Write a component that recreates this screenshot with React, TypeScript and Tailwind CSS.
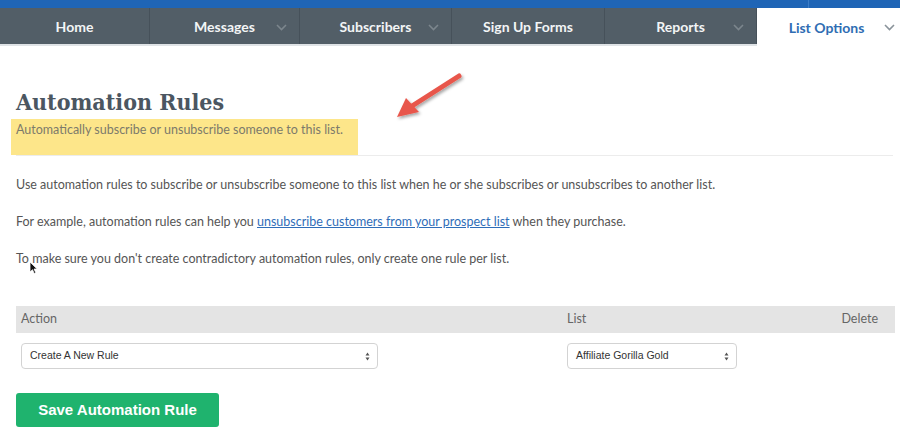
import React from 'react';

const tabs = [
  { label: 'Home', chevron: false, w: 'w-[150px]' },
  { label: 'Messages', chevron: true, w: 'w-[150px]' },
  { label: 'Subscribers', chevron: true, w: 'w-[152px]' },
  { label: 'Sign Up Forms', chevron: false, w: 'w-[153px]' },
  { label: 'Reports', chevron: true, w: 'w-[152px]' },
];

function Chevron({ className }: { className: string }) {
  return (
    <svg width="11" height="7" viewBox="0 0 11 7" className={className}>
      <path d="M1 1l4.5 4.5L10 1" fill="none" stroke="currentColor" strokeWidth="1.6" />
    </svg>
  );
}

function SelectBox({ value, width }: { value: string; width: string }) {
  return (
    <div
      className={`${width} h-[26px] flex items-center justify-between pl-[8px] pr-[7px] bg-white border border-[#d3d3d3] rounded-[4px] text-[10.5px] text-[#333] font-['Liberation_Sans',sans-serif]`}
    >
      <span>{value}</span>
      <svg width="5" height="9" viewBox="0 0 5 9">
        <path d="M2.5 0.5L4.5 3.5H0.5Z M2.5 8.5L4.5 5.5H0.5Z" fill="#555" />
      </svg>
    </div>
  );
}

export default function App() {
  return (
    <div className="relative w-[900px] h-[436px] overflow-hidden bg-white font-['Lato',sans-serif]">
      <div className="h-[8px] bg-[#1f65b6] flex justify-end">
        <div className="w-[92px] border-l border-[#3b7cc6]" />
      </div>
      <nav className="flex h-[38px] bg-[#525e67] border-b-2 border-[#dfe3e6]">
        {tabs.map((t) => (
          <div
            key={t.label}
            className={`relative ${t.w} flex items-center justify-center border-r border-[#46515a] text-[#f3f5f6] text-[14px] font-bold`}
          >
            <span>{t.label}</span>
            {t.chevron && <Chevron className="absolute right-[12px] top-[16px] text-[#7c868d]" />}
          </div>
        ))}
        <div className="relative flex-1 -mb-[2px] bg-white flex items-center justify-center text-[#2f6db3] text-[14px] font-bold">
          <span className="-ml-[4px]">List Options</span>
          <Chevron className="absolute right-[5px] top-[16px] text-[#8a939a]" />
        </div>
      </nav>

      <div className="px-[16px]">
        <h1 className="mt-[41px] text-[23px] leading-[30px] font-bold font-stretch-condensed text-[#4b5661] font-['DejaVu_Serif',serif]">
          Automation Rules
        </h1>
        <div className="-ml-[5px] mt-[2px] w-[347px] h-[36px] bg-[#fde68a] pl-[5px] pt-[2px] text-[12.5px] text-[#7c7a6a]">
          Automatically subscribe or unsubscribe someone to this list.
        </div>
        <div className="w-[877px] border-t border-[#ececec]" />

        <div className="text-[12.5px] text-[#555] leading-[16px]">
          <p className="mt-[21px]">
            Use automation rules to subscribe or unsubscribe someone to this list when he or she subscribes or unsubscribes to another list.
          </p>
          <p className="mt-[21px]">
            For example, automation rules can help you{' '}
            <span className="text-[#2f6db8] underline">unsubscribe customers from your prospect list</span> when they purchase.
          </p>
          <p className="mt-[21px]">To make sure you don't create contradictory automation rules, only create one rule per list.</p>
        </div>

        <div className="mt-[39px] w-[879px] h-[27px] bg-[#e4e4e4] flex items-center text-[12.5px] text-[#666]">
          <span className="pl-[5px] w-[551px]">Action</span>
          <span className="flex-1">List</span>
          <span className="pr-[17px]">Delete</span>
        </div>
        <div className="flex items-center h-[43px] pt-[3px]">
          <div className="pl-[5px] w-[551px]">
            <SelectBox value="Create A New Rule" width="w-[357px]" />
          </div>
          <SelectBox value="Affiliate Gorilla Gold" width="w-[170px]" />
        </div>
        <button className="mt-[17px] w-[203px] h-[34px] bg-[#1fb36e] rounded-[3px] text-white text-[15px] font-bold font-['Liberation_Sans',sans-serif]">
          Save Automation Rule
        </button>
      </div>

      {/* annotation arrow */}
      <svg className="absolute left-[390px] top-[70px]" width="80" height="56" viewBox="0 0 80 56">
        <defs>
          <filter id="sh" x="-20%" y="-20%" width="150%" height="150%">
            <feDropShadow dx="1.5" dy="2" stdDeviation="1.5" floodColor="#000" floodOpacity="0.35" />
          </filter>
        </defs>
        <g filter="url(#sh)">
          <path d="M69 6L22 36" stroke="#e8574b" strokeWidth="5" strokeLinecap="round" />
          <path d="M7 47L16 28L29 42Z" fill="#e8574b" />
        </g>
      </svg>

      {/* mouse cursor */}
      <svg className="absolute left-[29px] top-[261px]" width="9" height="14" viewBox="0 0 9 14">
        <path d="M1 1v10l2.5-2.3L5.2 12.5l1.6-.7-1.7-3.8H8.2Z" fill="#111" stroke="#fff" strokeWidth="0.8" />
      </svg>
    </div>
  );
}
